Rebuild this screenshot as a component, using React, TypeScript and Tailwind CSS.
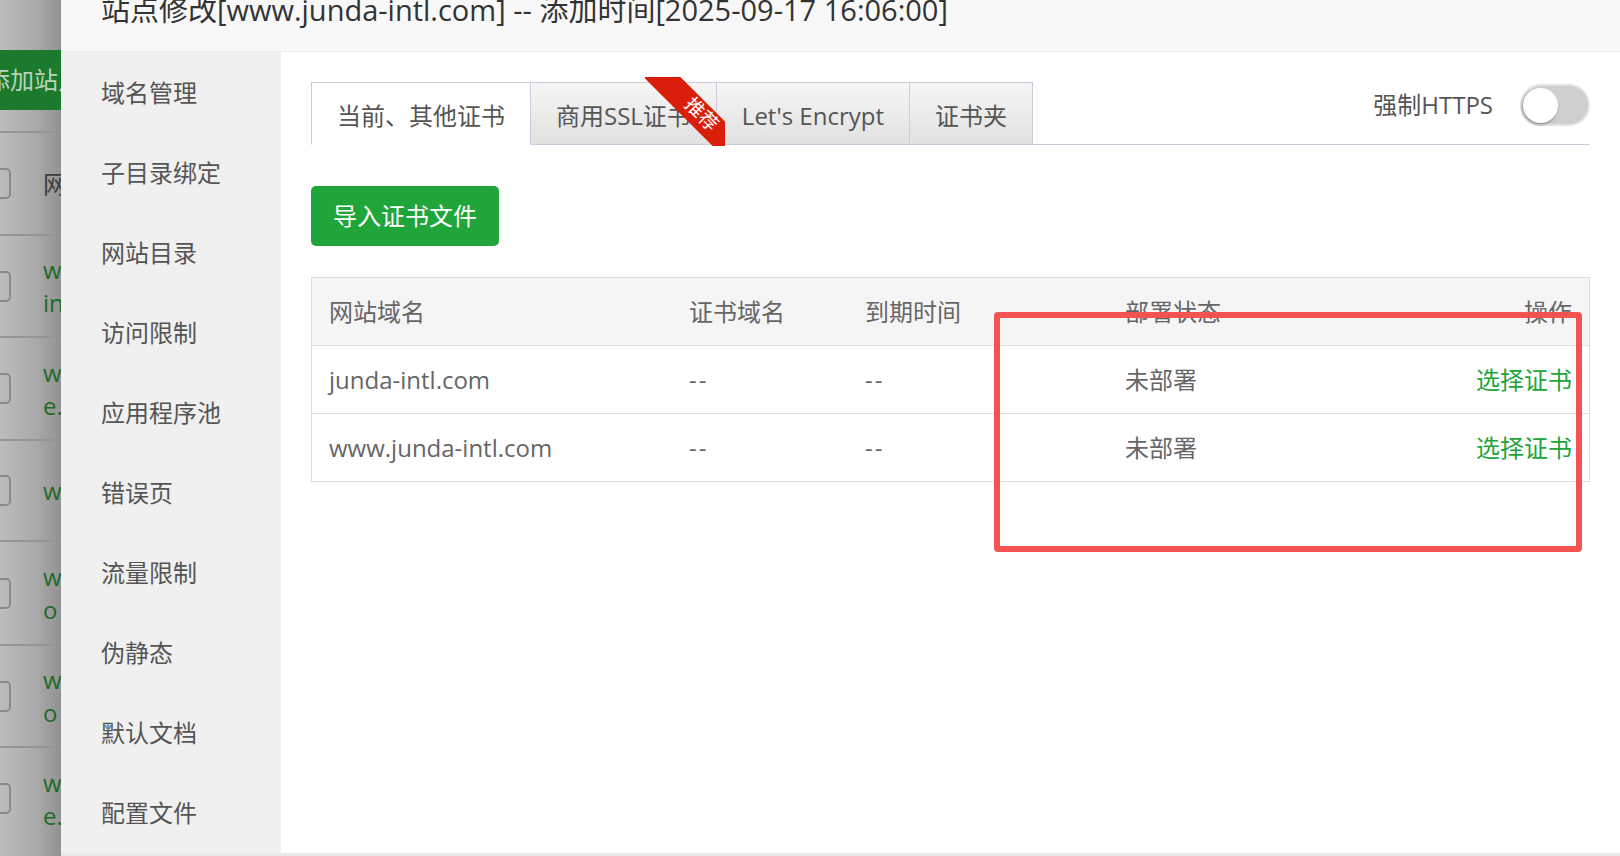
const navItems = [
  "域名管理",
  "子目录绑定",
  "网站目录",
  "访问限制",
  "应用程序池",
  "错误页",
  "流量限制",
  "伪静态",
  "默认文档",
  "配置文件",
];

const tabs = ["当前、其他证书", "商用SSL证书", "Let's Encrypt", "证书夹"];

const sites = [
  { name: "junda-intl.com", cert: "--", expire: "--", status: "未部署" },
  { name: "www.junda-intl.com", cert: "--", expire: "--", status: "未部署" },
];

// what peeks out from the site list behind the dialog
const behindRows = [
  { h: "h-[103px]", lines: ["网站名"], head: true },
  { h: "h-[102px]", lines: ["www.junda", "intl.com"] },
  { h: "h-[103px]", lines: ["www.mysite", "e.com"] },
  { h: "h-[101px]", lines: ["www.site.com"] },
  { h: "h-[104px]", lines: ["www.hello", "o site"] },
  { h: "h-[102px]", lines: ["www.world", "o site"] },
  { h: "h-[103px]", lines: ["www.demo", "e.com"] },
];

const font = "font-['Open_Sans','Noto_Sans_CJK_SC',sans-serif]";

function Behind() {
  return (
    <div className="w-[61px] shrink-0 overflow-hidden bg-[linear-gradient(to_right,#bdbdbd,#a9a9a9_60%,#929292)]">
      <div className="w-[240px]">
        <div className="h-[50px]" />
        <div className="flex h-[60px] items-center bg-[#1c7a2c]">
          <span className="-ml-[14px] text-[24px] leading-none text-[#b9d3bd]">添加站点</span>
        </div>
        <div className="h-[21px]" />
        {behindRows.map((row, i) => (
          <div
            key={i}
            className={`flex items-center border-t-2 border-[#959595] ${row.h}`}
          >
            <span className="-ml-[20px] h-[31px] w-[31px] shrink-0 rounded-[5px] border-2 border-[#8a8a8a]" />
            <div className="ml-[32px] flex flex-col">
              {row.lines.map((line) => (
                <span
                  key={line}
                  className={`whitespace-nowrap text-[24px] leading-[33px] ${row.head ? "text-[#3d3d3d]" : "text-[#1c6b28]"}`}
                >
                  {line}
                </span>
              ))}
            </div>
          </div>
        ))}
      </div>
    </div>
  );
}

function Ribbon() {
  return (
    <div className="pointer-events-none absolute left-[114px] -top-[6px] z-10 h-[69px] w-[80px] overflow-hidden">
      <div className="absolute left-[-23px] top-[22px] flex h-[26px] w-[150px] rotate-45 items-center justify-center bg-[#d91f0c]">
        <span className="-mt-[3px] ml-[10px] text-[19px] leading-none text-white">推荐</span>
      </div>
    </div>
  );
}

function Tabs() {
  return (
    <div className="flex h-[63px] items-start border-b border-[#cdcbdc]">
      {tabs.map((tab, i) => (
        <div
          key={tab}
          className={`relative -mb-px flex h-[63px] items-center border border-[#cdcbdc] px-[25px] pt-[5px] text-[24px] text-[#555] ${
            i === 0
              ? "border-b-white bg-white"
              : "-ml-px bg-[linear-gradient(to_bottom,#f6f6f6,#e1e1e1)]"
          }`}
        >
          {tab}
          {i === 1 && <Ribbon />}
        </div>
      ))}
      <div className="ml-auto mt-[2px] flex h-[42px] items-center gap-[27px]">
        <span className="text-[24px] text-[#555]">强制HTTPS</span>
        <div className="flex h-[42px] w-[70px] items-center rounded-full border-2 border-[#e4e4e4] bg-[#cfcfcf] px-[1px]">
          <span className="h-[35px] w-[35px] rounded-full bg-white shadow-[-1px_2px_3px_rgba(0,0,0,0.3)]" />
        </div>
      </div>
    </div>
  );
}

function CertTable() {
  const cols = "grid grid-cols-[360px_176px_260px_1fr_auto]";
  return (
    <div className="mt-[31px] border border-[#ddd]">
      <div className={`${cols} h-[67px] items-center bg-[#f5f5f5] text-[24px] text-[#666]`}>
        <span className="pl-[17px]">网站域名</span>
        <span className="pl-[17px]">证书域名</span>
        <span className="pl-[17px]">到期时间</span>
        <span className="pl-[17px]">部署状态</span>
        <span className="pr-[17px] text-right">操作</span>
      </div>
      {sites.map((s) => (
        <div
          key={s.name}
          className={`${cols} h-[68px] items-center border-t border-[#ddd] text-[24px] text-[#666]`}
        >
          <span className="pl-[17px]">{s.name}</span>
          <span className="pl-[17px] tracking-[2px]">{s.cert}</span>
          <span className="pl-[17px] tracking-[2px]">{s.expire}</span>
          <span className="pl-[17px]">{s.status}</span>
          <span className="pr-[17px] text-right text-[#20a53a]">选择证书</span>
        </div>
      ))}
    </div>
  );
}

export default function App() {
  return (
    <div className={`relative flex h-[856px] w-[1620px] overflow-hidden bg-[#e9e9e9] ${font}`}>
      <Behind />
      <div className="flex h-[853px] flex-1 flex-col">
        <div className="h-[52px] shrink-0 overflow-hidden border-b border-[#ececec] bg-[#f8f8f8] pl-[40px]">
          <h1 className="-mt-[5px] whitespace-nowrap text-[29px] leading-[29px] text-[#333]">
            站点修改[www.junda-intl.com] -- 添加时间[2025-09-17 16:06:00]
          </h1>
        </div>
        <div className="flex flex-1">
          <nav className="flex w-[220px] shrink-0 flex-col bg-[#f0f0f0] pt-[1px]">
            {navItems.map((item) => (
              <div key={item} className="flex h-[80px] items-center pl-[40px] text-[24px] text-[#555]">
                {item}
              </div>
            ))}
          </nav>
          <main className="flex-1 bg-white px-[30px] pt-[30px]">
            <Tabs />
            <button className="mt-[41px] flex h-[60px] items-center rounded-[5px] bg-[#20a53a] px-[22px] text-[24px] text-white">
              导入证书文件
            </button>
            <CertTable />
          </main>
        </div>
      </div>
      {/* annotation box drawn over the screenshot */}
      <div className="pointer-events-none absolute left-[994px] top-[312px] h-[240px] w-[588px] rounded-[4px] border-[6px] border-[#f55252]" />
    </div>
  );
}
